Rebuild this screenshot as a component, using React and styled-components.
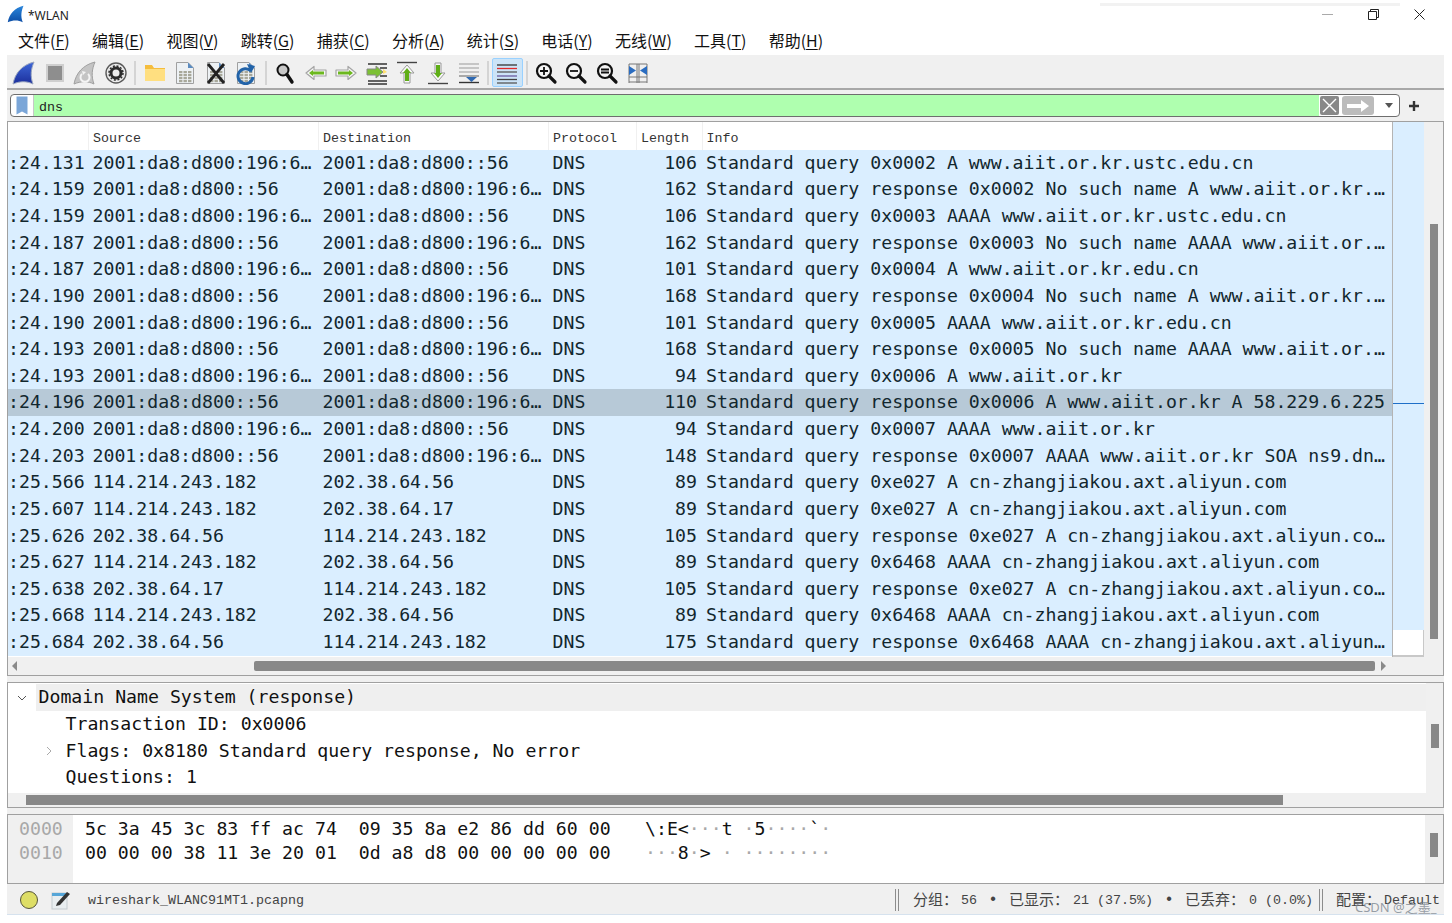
import React from 'react'
import styled, { createGlobalStyle } from 'styled-components'

const GlobalStyle = createGlobalStyle`
  html, body { margin: 0; padding: 0; background: #fff; }
  body { overflow: hidden; }
`

const MONO = `"DejaVu Sans Mono", monospace`
const SERIF_MONO = `"Liberation Mono", "Noto Sans CJK SC", monospace`
const CJK = `"Noto Sans CJK SC", "Noto Sans", sans-serif`

const Page = styled.div`
  position: relative;
  width: 1452px;
  height: 923px;
  overflow: hidden;
  background: #fff;
  display: flex;
  flex-direction: column;
`
const TitleBar = styled.div`
  height: 28px;
  display: flex;
  align-items: center;
  padding-left: 7px;
  font: 12px "Noto Sans", sans-serif;
  color: #222;
  gap: 3px;
  & .name { padding-top: 2px; }
  & .controls { margin-left: auto; display: flex; align-items: center; }
`
const WinButton = styled.div`
  width: 46px;
  height: 28px;
  display: flex;
  align-items: center;
  justify-content: center;
  margin-right: ${p => p.$mr || 0}px;
`
const MenuBar = styled.div`
  height: 23px;
  padding: 0 0 4px 18px;
  display: flex;
  align-items: center;
  gap: 22.2px;
  font: 16px ${CJK};
  color: #111;
  & u { text-underline-offset: 2px; }
`
const Main = styled.div`
  margin: 0 8px 0 7px;
  background: #f0f0f0;
  height: 860px;
  display: flex;
  flex-direction: column;
`
const Toolbar = styled.div`
  height: 32px;
  padding: 2px 0 0 2px;
  display: flex;
  align-items: center;
  border-bottom: 2px solid #a8a8a8;
`
const ToolButton = styled.div`
  width: 30.6px;
  height: 29px;
  box-sizing: border-box;
  display: flex;
  align-items: center;
  justify-content: center;
  ${p => p.$checked && 'background: #cce4f7; border: 1px solid #99d1ff; border-radius: 2px;'}
`
const ToolSep = styled.div`
  width: 2px;
  height: 24px;
  margin: 0 3px;
  background: #d4d4d4;
`
const FilterRow = styled.div`
  height: 31px;
  box-sizing: border-box;
  padding: 4px 0 4px 3px;
  display: flex;
  align-items: stretch;
`
const FilterBox = styled.div`
  width: 1390px;
  box-sizing: border-box;
  border: 1px solid #6e6e6e;
  border-radius: 4px;
  background: #fff;
  display: flex;
  align-items: stretch;
  overflow: hidden;
`
const Bookmark = styled.div`
  width: 22px;
  display: flex;
  align-items: center;
  justify-content: center;
  border-right: 1px solid #c8c8c8;
`
const FilterInput = styled.div`
  flex: 1;
  background: #afffaf;
  font: 13.33px/22px ${SERIF_MONO};
  color: #222;
  padding: 2px 0 0 5px;
`
const FilterClear = styled.div`
  width: 19px;
  margin: 1px 3px 1px 1px;
  border-radius: 2px;
  background: #888;
  display: flex;
  align-items: center;
  justify-content: center;
`
const FilterApply = styled.div`
  width: 32px;
  margin: 1px 0;
  border-radius: 3px;
  background: #bcbcbc;
  display: flex;
  align-items: center;
  justify-content: center;
`
const FilterDrop = styled.div`
  width: 20px;
  padding-left: 5px;
  display: flex;
  align-items: center;
  justify-content: center;
  &::after {
    content: '';
    border-left: 4px solid transparent;
    border-right: 4px solid transparent;
    border-top: 5px solid #555;
  }
`
const PlusButton = styled.div`
  width: 28px;
  display: flex;
  align-items: center;
  justify-content: center;
`
const Pane = styled.div`
  height: ${p => p.$h}px;
  margin-bottom: ${p => p.$mb || 0}px;
  box-sizing: border-box;
  border: 1px solid #a0a0a0;
  border-width: 1.5px 1px;
  background: #f0f0f0;
  display: flex;
  flex-direction: column;
  flex: none;
`
const PaneBody = styled.div`
  flex: 1;
  min-height: 0;
  display: flex;
`
const TableArea = styled.div`
  width: 1384px;
  flex: none;
  background: #fff;
`
const COLUMNS = '80px 230px 230px 88px 65.5px 1fr'
const ColHeader = styled.div`
  height: 27.4px;
  display: grid;
  grid-template-columns: ${COLUMNS};
  font: 13.33px/34px ${SERIF_MONO};
  color: #333;
  background: #fff;
  overflow: hidden;
  & > div { padding-left: 4px; border-left: 1px solid #f0f0f0; }
  & > div:first-child { border-left: 0; }
`
const PacketRow = styled.div`
  height: calc(506px / 19);
  display: grid;
  grid-template-columns: ${COLUMNS};
  background: ${p => (p.$selected ? '#b7c9d7' : '#daeeff')};
  color: #12272e;
  font: 18.2px/26.6px ${MONO};
  white-space: pre;
  overflow: hidden;
`
const Cell = styled.div`
  padding-left: ${p => (p.$flush ? 0 : 4.5)}px;
  padding-right: ${p => (p.$right ? 4.5 : 0)}px;
  text-align: ${p => (p.$right ? 'right' : 'left')};
  overflow: hidden;
`
const Minimap = styled.div`
  position: relative;
  width: 31px;
  flex: none;
  border-left: 1px solid #b4b4b4;
  background: #daeeff;
  display: flex;
  flex-direction: column;
  justify-content: flex-end;
  & .blank {
    height: 25px;
    background: #fff;
    border-bottom: 2px solid #c8c8c8;
    border-right: 1px solid #c8c8c8;
  }
`
const MinimapMark = styled.div`
  position: absolute;
  left: 0;
  right: 0;
  top: 281px;
  height: 1px;
  background: #1f6fc8;
`
const VScroll = styled.div`
  flex: 1;
  display: flex;
  flex-direction: column;
  align-items: center;
  padding-top: ${p => p.$top}px;
  background: #f0f0f0;
`
const VThumb = styled.div`
  width: 8px;
  height: ${p => p.$h}px;
  background: #888;
`
const HScroll = styled.div`
  height: ${p => p.$h || 18}px;
  flex: none;
  display: flex;
  align-items: center;
  padding-left: ${p => p.$left || 0}px;
  background: #f0f0f0;
`
const HThumb = styled.div`
  width: ${p => p.$w}px;
  height: 10px;
  margin-left: ${p => p.$ml || 0}px;
  background: #888;
  border-radius: ${p => (p.$round ? 2 : 0)}px;
`
const Arrow = styled.div`
  width: 0;
  height: 0;
  border-top: 5px solid transparent;
  border-bottom: 5px solid transparent;
  ${p => (p.$right ? 'border-left: 5px solid #8a8a8a;' : 'border-right: 5px solid #8a8a8a;')}
  margin-left: ${p => p.$ml || 0}px;
`
const DetailArea = styled.div`
  width: 1418px;
  flex: none;
  background: #fff;
  padding-top: 1px;
  font: 18.2px/26.6px ${MONO};
  color: #111;
`
const TreeRow = styled.div`
  height: 26.6px;
  display: flex;
  align-items: center;
  white-space: pre;
  padding-left: ${p => p.$indent}px;
  ${p => p.$head && 'background: linear-gradient(to right, #fff 28px, #efefef 28px);'}
`
const Twisty = styled.svg`
  width: 10px;
  height: 10px;
  flex: none;
  margin-right: ${p => p.$mr}px;
  margin-left: ${p => p.$ml}px;
`
const HexArea = styled.div`
  flex: 1;
  display: flex;
  background: #fff;
  font: 18.2px/24px ${MONO};
  white-space: pre;
  color: #111;
`
const Offsets = styled.div`
  width: 65px;
  flex: none;
  box-sizing: border-box;
  background: #f0f0f0;
  color: #a8a8a8;
  padding: 2px 0 0 11px;
`
const HexBytes = styled.div`
  width: 560px;
  flex: none;
  padding: 2px 0 0 12px;
`
const Ascii = styled.div`
  flex: 1;
  padding-top: 2px;
`
const Np = styled.span`
  color: #a8a8a8;
`
const HexScroll = styled.div`
  width: 18px;
  flex: none;
  background: #f0f0f0;
  display: flex;
  justify-content: center;
  padding-top: 18px;
  box-sizing: border-box;
  margin-left: auto;
`
const StatusBar = styled.div`
  height: 31px;
  box-sizing: border-box;
  padding-top: 2px;
  border-bottom: 1px solid #d6e2ee;
  display: flex;
  align-items: center;
  font: 13.33px ${SERIF_MONO};
  color: #444;
  white-space: pre;
`
const ExpertDot = styled.div`
  width: 16px;
  height: 16px;
  margin: 0 13px;
  border-radius: 50%;
  background: #dede66;
  border: 1.5px solid #55553a;
  flex: none;
`
const FileName = styled.span`
  width: 807px;
  margin-left: 17px;
  flex: none;
`
const Counts = styled.span`
  line-height: 18px;
`
const Zh = styled.span`
  font: 15px/18px ${CJK};
  display: inline-block;
  width: ${p => p.$w}px;
  vertical-align: -1px;
`
const Bullet = styled.span`
  display: inline-block;
  width: 32px;
  text-align: center;
  font-size: 16px;
`
const StatusSep = styled.div`
  width: 2px;
  height: 22px;
  flex: none;
  border-left: 1px solid #8c8c8c;
  border-right: 1px solid #8c8c8c;
  margin: ${p => p.$m};
`
const Watermark = styled.div`
  position: absolute;
  left: 1355px;
  top: 897px;
  font: 13px "Noto Sans", ${CJK};
  color: rgba(120, 130, 140, 0.75);
  white-space: pre;
`
const TopShadow = styled.div`
  position: absolute;
  left: 1100px;
  top: 3px;
  width: 300px;
  height: 3px;
  background: #f2f2f2;
`

const FIN = 'M1 23 C3 12 10 4 22 1 C19 8 18 15 21 23 C15 20 8 20 1 23Z'

const Fin = ({ size = 24, a = '#3d67d8', b = '#1c2f9c', line = '#9aa6c0' }) => (
  <svg width={size} height={size} viewBox="0 0 24 24">
    <defs>
      <linearGradient id={`fin${a.slice(1)}`} x1="0" y1="0" x2="0" y2="1">
        <stop offset="0" stopColor={a} />
        <stop offset="1" stopColor={b} />
      </linearGradient>
    </defs>
    <path d={FIN} fill={`url(#fin${a.slice(1)})`} stroke={line} strokeWidth="1" />
  </svg>
)
const StopIcon = () => (
  <svg width="24" height="24" viewBox="0 0 24 24">
    <rect x="4" y="4" width="16" height="16" fill="#8e8e8e" stroke="#cfcfcf" strokeWidth="2" />
  </svg>
)
const RestartIcon = () => (
  <svg width="24" height="24" viewBox="0 0 24 24">
    <path d={FIN} fill="#c4c4c4" stroke="#a0a0a0" />
    <path d="M15 13 A4.5 4.5 0 1 1 9 13" fill="none" stroke="#f4f4f4" strokeWidth="2" />
    <path d="M9 10 l4 1 -3 3z" fill="#f4f4f4" />
  </svg>
)
const OptionsIcon = () => (
  <svg width="24" height="24" viewBox="0 0 24 24">
    <circle cx="12" cy="12" r="10" fill="#ececec" stroke="#5a5a5a" strokeWidth="1.4" />
    <circle cx="12" cy="12" r="5" fill="none" stroke="#2c2c2c" strokeWidth="3" />
    <circle cx="12" cy="12" r="7" fill="none" stroke="#2c2c2c" strokeWidth="1.5" strokeDasharray="2 1.7" />
  </svg>
)
const FolderIcon = () => (
  <svg width="24" height="24" viewBox="0 0 24 24">
    <path d="M2 4 H9 L11 7 H22 V20 H2Z" fill="#f5bd3d" />
    <rect x="2" y="8" width="20" height="12" fill="#ffdf80" />
  </svg>
)
const DocBase = ({ children }) => (
  <svg width="24" height="24" viewBox="0 0 24 24">
    <path d="M3.5 1.5 H15 L20.5 7 V22.5 H3.5Z" fill="#edf1f4" stroke="#a0a0a0" />
    <path d="M15 1.5 V7 H20.5Z" fill="#5b8bc0" />
    <g fill="#a8a89a">
      {[10, 13, 16, 19].map(y => [6, 10.5, 15].map(x => <rect key={`${x}-${y}`} x={x} y={y} width="3.4" height="2.2" />))}
    </g>
    {children}
  </svg>
)
const DocIcon = () => <DocBase />
const CloseFileIcon = () => (
  <DocBase>
    <path d="M4 3 L20 22 M20 3 L4 22" stroke="#222" strokeWidth="2.8" />
  </DocBase>
)
const ReloadIcon = () => (
  <DocBase>
    <path d="M17 10 A7.5 7.5 0 1 0 19 16" fill="none" stroke="#2263a8" strokeWidth="3" />
    <path d="M13 3 L21 5 L17 12Z" fill="#2263a8" />
  </DocBase>
)
const SearchIcon = () => (
  <svg width="24" height="24" viewBox="0 0 24 24">
    <circle cx="10" cy="9" r="5.5" fill="#c8c8c8" stroke="#111" strokeWidth="2" />
    <path d="M14 13.5 L19 21" stroke="#111" strokeWidth="3.4" strokeLinecap="round" />
  </svg>
)
const SideArrow = ({ flip }) => (
  <svg width="24" height="24" viewBox="0 0 24 24">
    <g transform={flip ? 'translate(24 0) scale(-1 1)' : undefined}>
      <path d="M2 12 L10 5.5 V9 H22 V15 H10 V18.5Z" fill="#f6f6f6" stroke="#a4a4a4" strokeWidth="1.2" strokeLinejoin="round" />
      <path d="M5 12 L9 9 V10.5 H20 V13.5 H9 V15Z" fill="#6cb81e" />
    </g>
  </svg>
)
const GoToIcon = () => (
  <svg width="24" height="24" viewBox="0 0 24 24">
    <path d="M3 3 H22 M3 20 H22 M3 23 H22 M15 15 H22 M15 7 H22" stroke="#333" strokeWidth="1.4" />
    <path d="M2 8 H11 V5 L18 11 L11 17 V14 H2Z" fill="#7cc034" stroke="#888" />
    <path d="M18 8 L22 11 L18 13Z" fill="#ffe070" />
  </svg>
)
const FirstIcon = () => (
  <svg width="24" height="24" viewBox="0 0 24 24">
    <path d="M2 1.5 H22" stroke="#444" strokeWidth="1.4" />
    <path d="M12 4 L19 12 H15 V22 H9 V12 H5Z" fill="#fafafa" stroke="#999" />
    <path d="M12 7 L16 12 H14 V20 H10 V12 H8Z" fill="#5fae17" />
  </svg>
)
const LastIcon = () => (
  <svg width="24" height="24" viewBox="0 0 24 24">
    <path d="M2 22.5 H22" stroke="#444" strokeWidth="1.4" />
    <path d="M12 20 L19 12 H15 V2 H9 V12 H5Z" fill="#fafafa" stroke="#999" />
    <path d="M12 17 L16 12 H14 V4 H10 V12 H8Z" fill="#5fae17" />
  </svg>
)
const AutoScrollIcon = () => (
  <svg width="24" height="24" viewBox="0 0 24 24">
    <path d="M2 3 H22 M2 7 H22 M2 11 H22" stroke="#999" strokeWidth="1.2" />
    <path d="M2 15 H22" stroke="#777" strokeWidth="1.2" />
    <path d="M2 21.5 H22" stroke="#333" strokeWidth="1.4" />
    <path d="M9 16 H20 L14.5 21Z" fill="#2e68b0" />
  </svg>
)
const ColorizeIcon = () => (
  <svg width="24" height="24" viewBox="0 0 24 24">
    <g strokeWidth="1.3">
      <path d="M2 4 H22" stroke="#333" />
      <path d="M2 7.5 H22" stroke="#e02a2a" />
      <path d="M2 11 H22" stroke="#555" />
      <path d="M2 15 H22" stroke="#6a5aa0" />
      <path d="M2 18.5 H22" stroke="#444" />
      <path d="M2 22 H22" stroke="#555" />
    </g>
  </svg>
)
const ZoomIcon = ({ mark }) => (
  <svg width="24" height="24" viewBox="0 0 24 24">
    <circle cx="10" cy="10" r="7" fill="#f4f4f4" stroke="#111" strokeWidth="2.2" />
    <path d="M15 15 L21 21" stroke="#111" strokeWidth="3.2" strokeLinecap="round" />
    <path d={mark} stroke="#111" strokeWidth="1.8" />
  </svg>
)
const ResizeIcon = () => (
  <svg width="24" height="24" viewBox="0 0 24 24">
    <path d="M3 3 H21 M3 16 H21 M3 21 H21 M3 3 V22 M11 3 V22 M13 3 V22 M21 3 V22" stroke="#777" strokeWidth="1" />
    <path d="M3 5 L10 9.5 L3 14Z M21 5 L14 9.5 L21 14Z" fill="#2a6cc0" />
  </svg>
)
const BookmarkIcon = () => (
  <svg width="12" height="19" viewBox="0 0 12 19">
    <path d="M0.5 0.5 H11.5 V18.5 L6 15.5 L0.5 18.5Z" fill="#7ba6d8" />
  </svg>
)
const NoteIcon = () => (
  <svg width="20" height="20" viewBox="0 0 20 20">
    <rect x="1" y="3" width="15" height="16" fill="#e9eef0" stroke="#c4ccd0" />
    <rect x="1" y="3" width="15" height="3" fill="#56a6d8" />
    <path d="M6 13 L16 2 L19 4 L9 15 L5 16Z" fill="#333" />
  </svg>
)

const menus = [
  ['文件', 'F'], ['编辑', 'E'], ['视图', 'V'], ['跳转', 'G'], ['捕获', 'C'], ['分析', 'A'],
  ['统计', 'S'], ['电话', 'Y'], ['无线', 'W'], ['工具', 'T'], ['帮助', 'H']
]

const S6 = '2001:da8:d800:196:6…'
const D = '2001:da8:d800::56'
const packets = [
  [':24.131', S6, D, 106, 'Standard query 0x0002 A www.aiit.or.kr.ustc.edu.cn'],
  [':24.159', D, S6, 162, 'Standard query response 0x0002 No such name A www.aiit.or.kr.…'],
  [':24.159', S6, D, 106, 'Standard query 0x0003 AAAA www.aiit.or.kr.ustc.edu.cn'],
  [':24.187', D, S6, 162, 'Standard query response 0x0003 No such name AAAA www.aiit.or.…'],
  [':24.187', S6, D, 101, 'Standard query 0x0004 A www.aiit.or.kr.edu.cn'],
  [':24.190', D, S6, 168, 'Standard query response 0x0004 No such name A www.aiit.or.kr.…'],
  [':24.190', S6, D, 101, 'Standard query 0x0005 AAAA www.aiit.or.kr.edu.cn'],
  [':24.193', D, S6, 168, 'Standard query response 0x0005 No such name AAAA www.aiit.or.…'],
  [':24.193', S6, D, 94, 'Standard query 0x0006 A www.aiit.or.kr'],
  [':24.196', D, S6, 110, 'Standard query response 0x0006 A www.aiit.or.kr A 58.229.6.225'],
  [':24.200', S6, D, 94, 'Standard query 0x0007 AAAA www.aiit.or.kr'],
  [':24.203', D, S6, 148, 'Standard query response 0x0007 AAAA www.aiit.or.kr SOA ns9.dn…'],
  [':25.566', '114.214.243.182', '202.38.64.56', 89, 'Standard query 0xe027 A cn-zhangjiakou.axt.aliyun.com'],
  [':25.607', '114.214.243.182', '202.38.64.17', 89, 'Standard query 0xe027 A cn-zhangjiakou.axt.aliyun.com'],
  [':25.626', '202.38.64.56', '114.214.243.182', 105, 'Standard query response 0xe027 A cn-zhangjiakou.axt.aliyun.co…'],
  [':25.627', '114.214.243.182', '202.38.64.56', 89, 'Standard query 0x6468 AAAA cn-zhangjiakou.axt.aliyun.com'],
  [':25.638', '202.38.64.17', '114.214.243.182', 105, 'Standard query response 0xe027 A cn-zhangjiakou.axt.aliyun.co…'],
  [':25.668', '114.214.243.182', '202.38.64.56', 89, 'Standard query 0x6468 AAAA cn-zhangjiakou.axt.aliyun.com'],
  [':25.684', '202.38.64.56', '114.214.243.182', 175, 'Standard query response 0x6468 AAAA cn-zhangjiakou.axt.aliyun…']
]

const App = () => (
  <Page>
    <GlobalStyle />
    <TopShadow />
    <TitleBar>
      <Fin size={18} a="#2a86dc" b="#0d4ea6" line="none" />
      <span className="name">*WLAN</span>
      <div className="controls">
        <WinButton>
          <svg width="11" height="11" viewBox="0 0 11 11"><path d="M0 5.5 H11" stroke="#aaa" /></svg>
        </WinButton>
        <WinButton>
          <svg width="11" height="11" viewBox="0 0 11 11"><path d="M0.5 2.5 H8.5 V10.5 H0.5Z M2.5 2.5 V0.5 H10.5 V8.5 H8.5" fill="none" stroke="#222" /></svg>
        </WinButton>
        <WinButton $mr={10}>
          <svg width="11" height="11" viewBox="0 0 11 11"><path d="M0.5 0.5 L10.5 10.5 M10.5 0.5 L0.5 10.5" stroke="#222" /></svg>
        </WinButton>
      </div>
    </TitleBar>
    <MenuBar>
      {menus.map(([zh, key]) => (
        <span key={key}>{zh}(<u>{key}</u>)</span>
      ))}
    </MenuBar>
    <Main>
      <Toolbar>
        <ToolButton><Fin /></ToolButton>
        <ToolButton><StopIcon /></ToolButton>
        <ToolButton><RestartIcon /></ToolButton>
        <ToolButton><OptionsIcon /></ToolButton>
        <ToolSep />
        <ToolButton><FolderIcon /></ToolButton>
        <ToolButton><DocIcon /></ToolButton>
        <ToolButton><CloseFileIcon /></ToolButton>
        <ToolButton><ReloadIcon /></ToolButton>
        <ToolSep />
        <ToolButton><SearchIcon /></ToolButton>
        <ToolButton><SideArrow /></ToolButton>
        <ToolButton><SideArrow flip /></ToolButton>
        <ToolButton><GoToIcon /></ToolButton>
        <ToolButton><FirstIcon /></ToolButton>
        <ToolButton><LastIcon /></ToolButton>
        <ToolButton><AutoScrollIcon /></ToolButton>
        <ToolSep />
        <ToolButton $checked><ColorizeIcon /></ToolButton>
        <ToolSep />
        <ToolButton><ZoomIcon mark="M6 10 H14 M10 6 V14" /></ToolButton>
        <ToolButton><ZoomIcon mark="M6 10 H14" /></ToolButton>
        <ToolButton><ZoomIcon mark="M6 8.5 H14 M6 11.5 H14" /></ToolButton>
        <ToolButton><ResizeIcon /></ToolButton>
      </Toolbar>
      <FilterRow>
        <FilterBox>
          <Bookmark><BookmarkIcon /></Bookmark>
          <FilterInput>dns</FilterInput>
          <FilterClear>
            <svg width="15" height="15" viewBox="0 0 15 15"><path d="M1 1 L14 14 M14 1 L1 14" stroke="#fff" strokeWidth="1.4" /></svg>
          </FilterClear>
          <FilterApply>
            <svg width="24" height="14" viewBox="0 0 24 14"><path d="M1 5 H15 V1 L23 7 L15 13 V9 H1Z" fill="#fff" /></svg>
          </FilterApply>
          <FilterDrop />
        </FilterBox>
        <PlusButton>
          <svg width="12" height="12" viewBox="0 0 12 12"><path d="M6 1 V11 M1 6 H11" stroke="#333" strokeWidth="2.4" /></svg>
        </PlusButton>
      </FilterRow>
      <Pane $h={555} $mb={6}>
        <PaneBody>
          <TableArea>
            <ColHeader>
              <div />
              <div>Source</div>
              <div>Destination</div>
              <div>Protocol</div>
              <div>Length</div>
              <div>Info</div>
            </ColHeader>
            {packets.map(([time, src, dst, len, info], i) => (
              <PacketRow key={i} $selected={i === 9}>
                <Cell $flush>{time}</Cell>
                <Cell>{src}</Cell>
                <Cell>{dst}</Cell>
                <Cell>DNS</Cell>
                <Cell $right>{len}</Cell>
                <Cell>{info}</Cell>
              </PacketRow>
            ))}
          </TableArea>
          <Minimap>
            <MinimapMark />
            <div className="blank" />
          </Minimap>
          <VScroll $top={102}><VThumb $h={415} /></VScroll>
        </PaneBody>
        <HScroll>
          <Arrow $ml={4} />
          <HThumb $ml={237} $w={1121} $round />
          <Arrow $right $ml={6} />
        </HScroll>
      </Pane>
      <Pane $h={126} $mb={6}>
        <PaneBody>
          <DetailArea>
            <TreeRow $indent={0} $head>
              <Twisty viewBox="0 0 10 10" $ml={9} $mr={11.5}><path d="M1 3 L5 7 L9 3" fill="none" stroke="#555" /></Twisty>
              Domain Name System (response)
            </TreeRow>
            <TreeRow $indent={57.5}>Transaction ID: 0x0006</TreeRow>
            <TreeRow $indent={0}>
              <Twisty viewBox="0 0 10 10" $ml={36} $mr={11.5}><path d="M3 1 L7 5 L3 9" fill="none" stroke="#aaa" /></Twisty>
              Flags: 0x8180 Standard query response, No error
            </TreeRow>
            <TreeRow $indent={57.5}>Questions: 1</TreeRow>
          </DetailArea>
          <VScroll $top={41}><VThumb $h={24} /></VScroll>
        </PaneBody>
        <HScroll $h={14} $left={18}><HThumb $w={1257} /></HScroll>
      </Pane>
      <Pane $h={70}>
        <HexArea>
          <Offsets>0000{'\n'}0010</Offsets>
          <HexBytes>5c 3a 45 3c 83 ff ac 74  09 35 8a e2 86 dd 60 00{'\n'}00 00 00 38 11 3e 20 01  0d a8 d8 00 00 00 00 00</HexBytes>
          <Ascii>
            \:E&lt;<Np>···</Np>t <Np>·</Np>5<Np>····</Np>`<Np>·</Np>{'\n'}
            <Np>···</Np>8<Np>·</Np>&gt; <Np>·</Np> <Np>········</Np>
          </Ascii>
          <HexScroll><VThumb $h={24} /></HexScroll>
        </HexArea>
      </Pane>
      <StatusBar>
        <ExpertDot />
        <NoteIcon />
        <FileName>wireshark_WLANC91MT1.pcapng</FileName>
        <StatusSep $m="0 14px 0 0" />
        <Counts>
          <Zh $w={48}>分组：</Zh>56<Bullet>•</Bullet><Zh $w={64}>已显示：</Zh>21 (37.5%)<Bullet>•</Bullet><Zh $w={64}>已丢弃：</Zh>0 (0.0%)
        </Counts>
        <StatusSep $m="0 13px 0 6px" />
        <Counts><Zh $w={48}>配置：</Zh>Default</Counts>
      </StatusBar>
    </Main>
    <Watermark>CSDN @之墨_</Watermark>
  </Page>
)

export default App
